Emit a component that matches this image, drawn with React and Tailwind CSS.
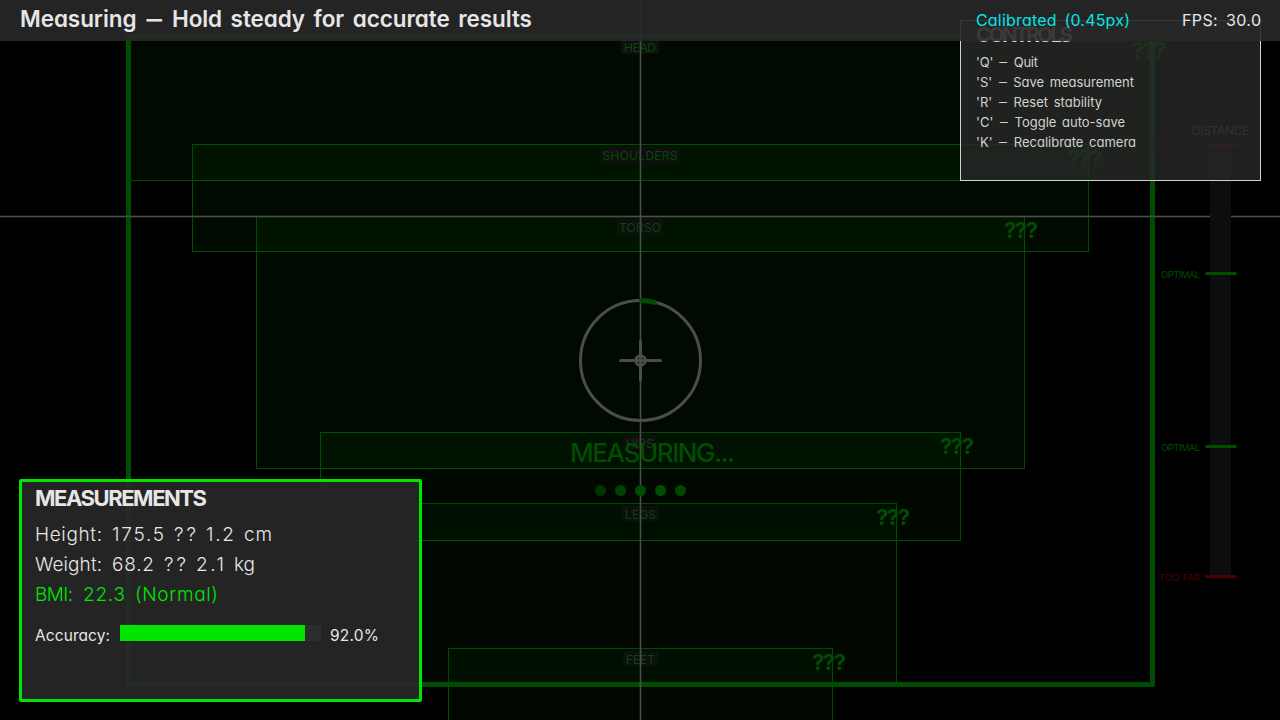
import { useLayoutEffect, useRef } from "react";

// Single-line text whose tracking is adjusted so that it spans a given width.
function Fit({ w, className = "", children }) {
  const ref = useRef(null);
  useLayoutEffect(() => {
    const el = ref.current;
    el.style.letterSpacing = "0px";
    const natural = el.getBoundingClientRect().width;
    const n = el.textContent.length;
    const step = (w - natural) / Math.max(1, n - 1);
    el.style.letterSpacing = step + "px";
    el.style.marginRight = -step + "px";
  }, [w, children]);
  return (
    <span ref={ref} className={`inline-block shrink-0 whitespace-pre ${className}`}>
      {children}
    </span>
  );
}

function Dash({ small }) {
  return (
    <span className={small ? "inline-block scale-x-[1.9] px-[2px]" : "inline-block scale-x-[2.1] px-[4px]"}>-</span>
  );
}

const zones = [
  { name: "HEAD", w: 32, box: "left-[128px] top-[36px] w-[1025px] h-[145px] bg-[#00ff00]/4", plate: "left-[621px] top-[39px] w-[38px] h-[15px] leading-[17px]", mark: "left-[1132px] top-[40px]" },
  { name: "SHOULDERS", w: 75, box: "left-[192px] top-[144px] w-[897px] h-[108px] bg-[#00ff00]/4", plate: "left-[600px] top-[147px] w-[80px] h-[15px] leading-[17px]", mark: "left-[1068px] top-[148px]" },
  { name: "TORSO", w: 42, box: "left-[256px] top-[216px] w-[769px] h-[253px] bg-[#00ff00]/4", plate: "left-[617px] top-[219px] w-[46px] h-[15px] leading-[17px]", mark: "left-[1004px] top-[220px]" },
  { name: "HIPS", w: 28, box: "left-[320px] top-[432px] w-[641px] h-[109px] bg-[#00ff00]/3", plate: "left-[623px] top-[435px] w-[34px] h-[15px] leading-[17px]", mark: "left-[940px] top-[436px]" },
  { name: "LEGS", w: 31, box: "left-[384px] top-[503px] w-[513px] h-[182px] bg-[#00ff00]/3", plate: "left-[622px] top-[506px] w-[37px] h-[15px] leading-[17px]", mark: "left-[876px] top-[507px]" },
  { name: "FEET", w: 29, box: "left-[448px] top-[648px] w-[385px] h-[73px] bg-[#00ff00]/3", plate: "left-[623px] top-[651px] w-[35px] h-[15px] leading-[17px]", mark: "left-[812px] top-[652px]" },
];

const ticks = [
  { label: "TOO CLOSE", w: 54, row: "top-[136px] text-[#4c0000]", bar: "bg-[#4c0000]" },
  { label: "OPTIMAL", w: 39, row: "top-[264px] text-[#004c00]", bar: "bg-[#004c00]" },
  { label: "OPTIMAL", w: 39, row: "top-[437px] text-[#004c00]", bar: "bg-[#004c00]" },
  { label: "TOO FAR", w: 41, row: "top-[567px] text-[#4c0000]", bar: "bg-[#4c0000]" },
];

const controls = [
  { key: "Q", text: "Quit", w: 62 },
  { key: "S", text: "Save measurement", w: 158 },
  { key: "R", text: "Reset stability", w: 126 },
  { key: "C", text: "Toggle auto-save", w: 149 },
  { key: "K", text: "Recalibrate camera", w: 160 },
];

const readings = [
  { tone: "text-[#e6e6e6]", words: [["Height:", 67], ["175.5", 52], ["??", 22], ["1.2", 28], ["cm", 28]] },
  { tone: "text-[#e6e6e6]", words: [["Weight:", 67], ["68.2", 42], ["??", 22], ["2.1", 28], ["kg", 21]] },
  { tone: "text-[#00e600]", words: [["BMI:", 38], ["22.3", 42], ["(Normal)", 83]] },
];

function Guides() {
  return (
    <>
      {zones.map((z) => (
        <div key={z.name} className={`absolute border border-[#004c00] ${z.box}`} />
      ))}
      <div className="absolute left-[126px] top-[34px] h-[653px] w-[1029px] rounded-[2px] border-[5px] border-[#004c00]" />
      {zones.map((z) => (
        <div key={z.name} className={`absolute flex justify-center bg-[#110e12] text-[12px] text-[#004c00] ${z.plate}`}>
          <Fit w={z.w}>{z.name}</Fit>
        </div>
      ))}
      {zones.map((z) => (
        <div key={z.name} className={`absolute text-[22px] font-bold leading-[20px] text-[#004c00] ${z.mark}`}>
          <Fit w={34}>???</Fit>
        </div>
      ))}
      <div className="absolute left-0 top-[215px] h-[3px] w-full border-y border-[#4c4c4c]/30 bg-[#4c4c4c] bg-clip-padding" />
      <div className="absolute left-[639px] top-0 h-full w-[3px] border-x border-[#4c4c4c]/30 bg-[#4c4c4c] bg-clip-padding" />
    </>
  );
}

function Reticle() {
  return (
    <svg className="absolute left-[575px] top-[295px]" width="131" height="131" viewBox="0 0 131 131" fill="none">
      <circle cx="65.5" cy="65.5" r="60" stroke="#4c4c4c" strokeWidth="3" />
      <path d="M66.5 5.5A60 60 0 0 1 79.5 7.4" stroke="#004c00" strokeWidth="5" strokeLinecap="round" />
      <path d="M45.5 65.5H85.5M65.5 46V85" stroke="#4c4c4c" strokeWidth="3" strokeLinecap="round" />
      <circle cx="65.5" cy="65.5" r="4.7" stroke="#4c4c4c" strokeWidth="3" />
    </svg>
  );
}

function Status() {
  return (
    <div className="absolute left-[570px] top-[437px] flex flex-col text-[#004c00]">
      <div className="text-[26px] font-medium leading-[32px]">
        <Fit w={165}>MEASURING...</Fit>
      </div>
      <div className="mt-[16px] flex gap-[9px] pl-[25px]">
        <i className="size-[11px] rounded-full bg-[#003400]" />
        <i className="size-[11px] rounded-full bg-[#004000]" />
        <i className="size-[11px] rounded-full bg-[#004c00]" />
        <i className="size-[11px] rounded-full bg-[#004c00]" />
        <i className="size-[11px] rounded-full bg-[#004600]" />
      </div>
    </div>
  );
}

function DistanceScale() {
  return (
    <>
      <div className="absolute left-[1210px] top-[145px] h-[432px] w-[21px] bg-[#0d0d0d]" />
      <div className="absolute left-[1191.5px] top-[121px] text-[12px] leading-[20px] text-[#5a5a5a]">
        <Fit w={58}>DISTANCE</Fit>
      </div>
      {ticks.map((t, i) => (
        <div key={i} className={`absolute left-[1130px] flex h-[19px] w-[107px] items-center justify-end gap-[5px] text-[9.5px] leading-[19px] ${t.row}`}>
          <Fit w={t.w} className="pt-[2px]">{t.label}</Fit>
          <span className={`h-[3px] w-[32px] rounded-full ${t.bar}`} />
        </div>
      ))}
    </>
  );
}

function Controls() {
  return (
    <section className="absolute left-[960px] top-[20px] flex h-[161px] w-[301px] flex-col border border-[#d0d4d0] bg-[#282828]/80 pl-[15px] text-[#d0d2d0]">
      <h2 className="mt-[3px] text-[20.5px] font-bold leading-[22px]">
        <Fit w={97}>CONTROLS</Fit>
      </h2>
      <ul className="mt-[6px] text-[13px] leading-[20px]">
        {controls.map((c) => (
          <li key={c.key} className="flex h-[20px]">
            <Fit w={c.w} className="[word-spacing:2px]">
              '{c.key}' <Dash small /> {c.text}
            </Fit>
          </li>
        ))}
      </ul>
    </section>
  );
}

function Measurements() {
  return (
    <section className="absolute left-[19px] top-[479px] flex h-[223px] w-[403px] flex-col rounded-[2px] border-[3px] border-[#00e600] bg-[#282828]/90 pl-[13px] text-[#e6e6e6]">
      <h2 className="mt-[4px] text-[22px] font-bold leading-[25px]">
        <Fit w={172}>MEASUREMENTS</Fit>
      </h2>
      <div className="mt-[9px] flex flex-col text-[19px] font-light leading-[30px]">
        {readings.map((r) => (
          <p key={r.words[0][0]} className={`flex gap-[10px] ${r.tone}`}>
            {r.words.map(([word, w], i) => (
              <Fit key={i} w={w}>{word}</Fit>
            ))}
          </p>
        ))}
      </div>
      <div className="mt-[12px] flex h-[20px] text-[15.5px] leading-[27px]">
        <div className="w-[85px]"><Fit w={75}>Accuracy:</Fit></div>
        <div className="mt-[3px] h-[16px] w-[201px] bg-[#2d2d2d]">
          <div className="h-full w-[185px] bg-[#00e600]" />
        </div>
        <div className="ml-[9px]"><Fit w={49}>92.0%</Fit></div>
      </div>
    </section>
  );
}

function Header() {
  return (
    <header className="absolute inset-x-0 top-0 flex h-[41px] bg-[#282828]/90 pl-[20px] pr-[19px] text-[#e6e6e6]">
      <h1 className="text-[22.5px] font-semibold leading-[37px]">
        <Fit w={512} className="[word-spacing:3px]">
          Measuring <Dash /> Hold steady for accurate results
        </Fit>
      </h1>
      <div className="ml-auto flex text-[16px] leading-[41px]">
        <div className="w-[206px] text-[#00e6e6]">
          <Fit w={154} className="[word-spacing:3px]">Calibrated (0.45px)</Fit>
        </div>
        <Fit w={79} className="[word-spacing:3px]">FPS: 30.0</Fit>
      </div>
    </header>
  );
}

export default function App() {
  return (
    <main className="relative h-[720px] w-[1280px] overflow-hidden bg-black font-['Inter','Liberation_Sans',sans-serif] [font-feature-settings:'cv11']">
      <Guides />
      <Reticle />
      <Status />
      <DistanceScale />
      <Controls />
      <Measurements />
      <Header />
    </main>
  );
}
